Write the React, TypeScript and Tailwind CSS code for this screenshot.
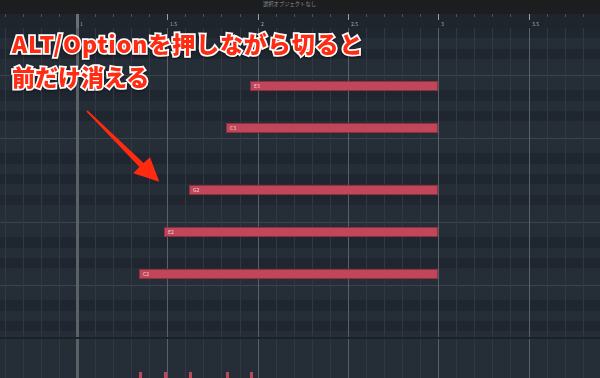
import React from "react";

const ORIGIN = 77;
const CELL = 18.06;

type Band = { h: number; dark?: boolean; line?: boolean };
const bands: Band[] = [
  { h: 10, dark: true },
  { h: 11 },
  { h: 10, dark: true },
  { h: 16 },
  { h: 15, line: true },
  { h: 11, dark: true },
  { h: 10 },
  { h: 10, dark: true },
  { h: 17 },
  { h: 15, line: true },
  { h: 11, dark: true },
  { h: 10 },
  { h: 10, dark: true },
  { h: 11 },
  { h: 10, dark: true },
  { h: 17 },
  { h: 15, line: true },
  { h: 11, dark: true },
  { h: 10 },
  { h: 10, dark: true },
  { h: 17 },
  { h: 15, line: true },
  { h: 11, dark: true },
  { h: 10 },
  { h: 10, dark: true },
  { h: 6 },
];

const notes = [
  { label: "E3", x: 250, y: 53 },
  { label: "C3", x: 226, y: 95 },
  { label: "G2", x: 189, y: 157 },
  { label: "E2", x: 164, y: 199 },
  { label: "C2", x: 139, y: 241 },
];

const ks: number[] = [];
for (let k = -4; k <= 29; k++) ks.push(k);

const labels: Record<number, string> = { 0: "1", 5: "1.5", 10: "2", 15: "2.5", 20: "3", 25: "3.5" };

function VLines({ withThick = true }: { withThick?: boolean }) {
  return (
    <div className="absolute inset-0 pointer-events-none">
      {ks.map((k) => {
        const x = ORIGIN + k * CELL;
        if (k === 0) {
          return withThick ? (
            <div key={k} className="absolute top-0 bottom-0 w-[3px] bg-[#5c6166]" style={{ left: x - 1.5 }} />
          ) : null;
        }
        const major = k % 5 === 0 && k > 0;
        return (
          <div
            key={k}
            className={`absolute top-0 bottom-0 w-px ${major ? "bg-[#58616b]" : "bg-[#303943]"}`}
            style={{ left: Math.round(x) }}
          />
        );
      })}
    </div>
  );
}

export default function App() {
  return (
    <div
      className="relative w-[600px] h-[378px] overflow-hidden flex flex-col bg-[#252d36]"
      style={{ fontFamily: '"Noto Sans CJK JP", "Noto Sans", sans-serif' }}
    >
      {/* top bar */}
      <div className="h-[14px] bg-[#1c1d1f] flex items-start">
        <div className="w-[263px]" />
        <span className="text-[5.3px] leading-[8px] text-[#8d9094]">選択オブジェクトなし</span>
      </div>

      {/* ruler */}
      <div className="relative h-[14px] bg-[#1f252c]">
        {ks.map((k) => {
          const x = ORIGIN + k * CELL;
          if (k === 0) {
            return <div key={k} className="absolute top-0 bottom-0 w-[3px] bg-[#6b6f74]" style={{ left: x - 1.5 }} />;
          }
          const major = k % 5 === 0;
          return (
            <div
              key={k}
              className={`absolute top-0 w-px ${major ? "h-[6px] bg-[#9aa0a6]" : "h-[3px] bg-[#4a525b]"}`}
              style={{ left: Math.round(x) }}
            />
          );
        })}
        {Object.entries(labels).map(([k, t]) => (
          <span
            key={k}
            className="absolute top-[7px] text-[5px] leading-[6px] text-[#a9adb2]"
            style={{ left: Math.round(ORIGIN + Number(k) * CELL) + 3 }}
          >
            {t}
          </span>
        ))}
      </div>

      {/* note area */}
      <div className="relative h-[309px] flex flex-col">
        {bands.map((b, i) => (
          <div
            key={i}
            className={`${b.dark ? "bg-[#1f2630]" : "bg-[#252d36]"} ${b.line ? "border-t border-[#3b444e]" : ""}`}
            style={{ height: b.h }}
          />
        ))}
        <VLines />
        {notes.map((n) => (
          <div
            key={n.label}
            className="absolute h-[10px] bg-[#c2465a] border border-[#8d2f3e] flex items-center"
            style={{ left: n.x, top: n.y, width: 438 - n.x }}
          >
            <span className="ml-[3px] text-[5px] leading-[6px] text-[#f3d3d9]">{n.label}</span>
          </div>
        ))}
      </div>

      {/* separator */}
      <div className="h-[2px] bg-[#1b2128] relative z-10" />

      {/* velocity lane */}
      <div className="relative h-[39px] bg-[#252d36]">
        <VLines />
        {notes.map((n) => (
          <div key={n.label} className="absolute bottom-0 h-[6px] w-[3px] bg-[#c2465a]" style={{ left: n.x }} />
        ))}
      </div>

      {/* annotation text */}
      <div className="absolute left-[12px] top-[29px] flex flex-col gap-[4px]">
        <span className="text-[23px] leading-[29px] font-black text-[#ff2b12] tracking-[0.9px] [paint-order:stroke_fill] [-webkit-text-stroke:3.5px_white] drop-shadow-[0_1px_1px_rgba(0,0,0,0.5)]">
          ALT/Optionを押しながら切ると
        </span>
        <span className="text-[23px] leading-[29px] font-black text-[#ff2b12] [paint-order:stroke_fill] [-webkit-text-stroke:3.5px_white] drop-shadow-[0_1px_1px_rgba(0,0,0,0.5)]">
          前だけ消える
        </span>
      </div>

      {/* arrow */}
      <svg className="absolute left-0 top-0 pointer-events-none" width="600" height="378" viewBox="0 0 600 378">
        <polygon
          points="86.3,111.6 139.4,167.1 133.3,173.3 159.3,181.7 150,157.3 143.6,162.9 87.7,110.4"
          fill="#ff2a10"
        />
      </svg>
    </div>
  );
}
